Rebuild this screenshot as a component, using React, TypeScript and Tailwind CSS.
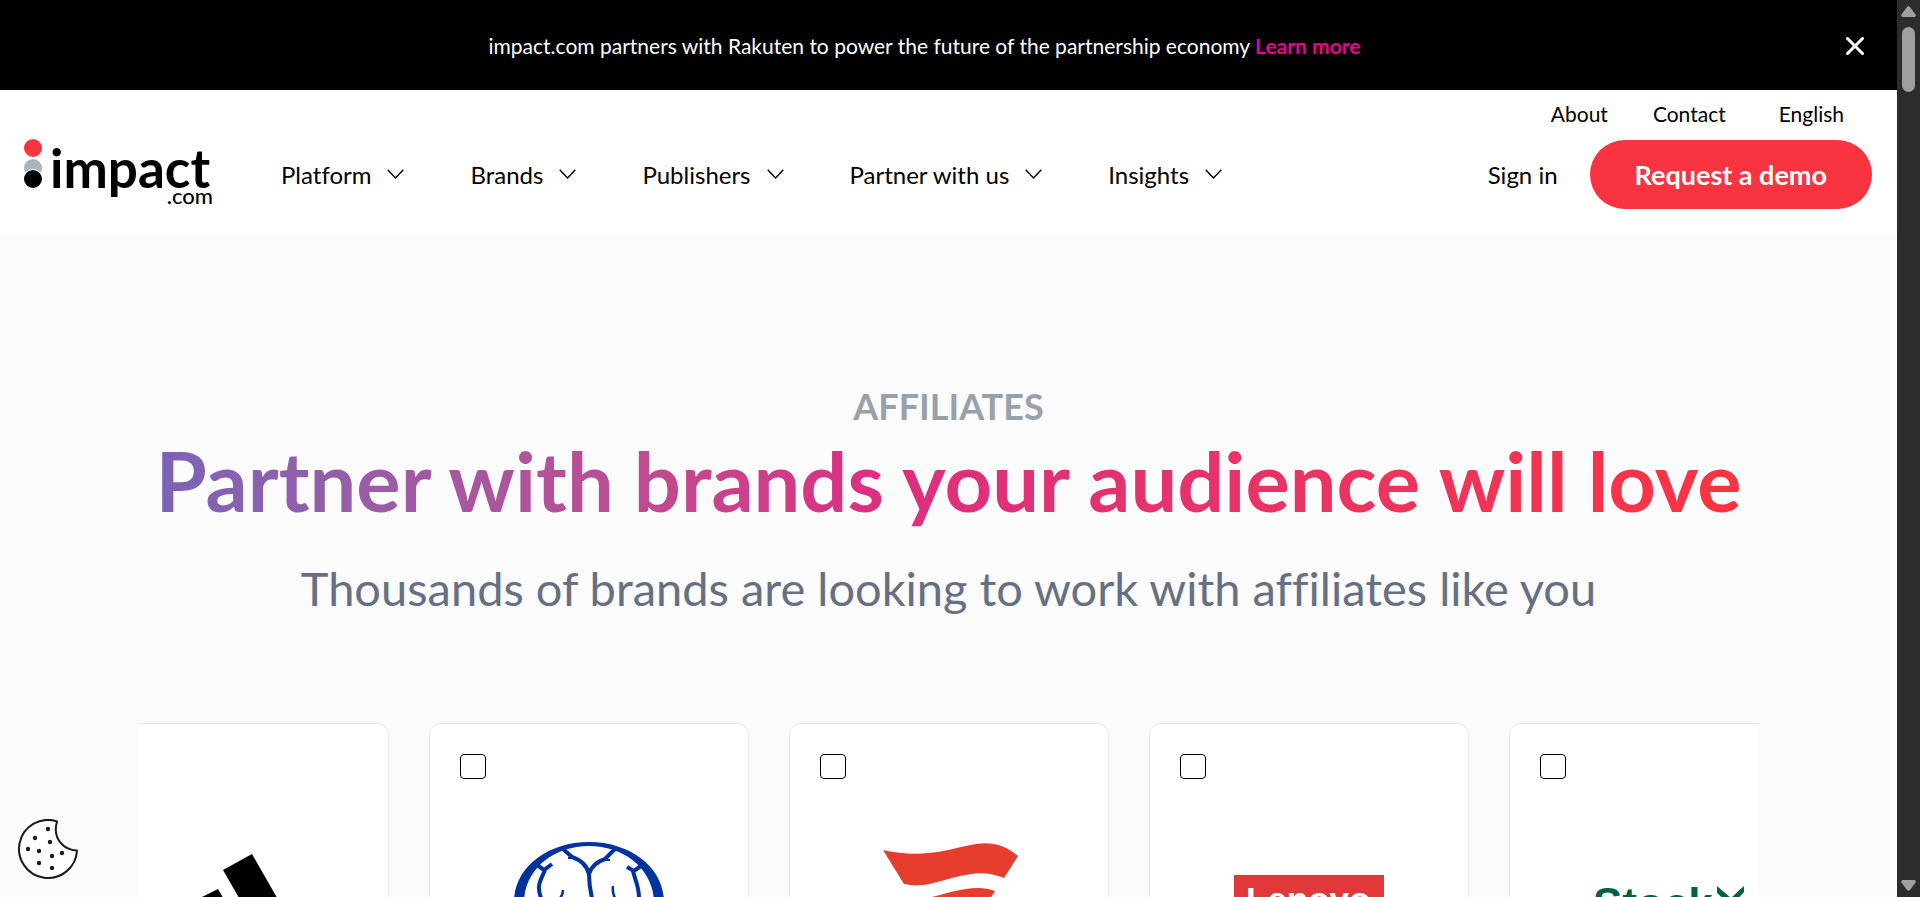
import React from "react";

const navItems = ["Platform", "Brands", "Publishers", "Partner with us", "Insights"];

const Logo = () => (
  <svg width="190" height="70" viewBox="0 0 190 70" role="img" aria-label="impact.com">
    <circle cx="9" cy="9" r="9" fill="#f7343f" />
    <circle cx="9" cy="29" r="9" fill="#a9b4be" />
    <circle cx="9" cy="40" r="10" fill="#fff" />
    <circle cx="9" cy="40" r="9" fill="#000" />
    <text x="26" y="49" fontFamily="Lato, sans-serif" fontSize="53" fontWeight="700">
      impact
    </text>
    <text x="189" y="65" textAnchor="end" fontFamily="Lato, sans-serif" fontSize="22" fontWeight="500">
      .com
    </text>
  </svg>
);

const Chevron = () => (
  <svg width="17" height="11" viewBox="0 0 17 11" fill="none" stroke="#000" strokeWidth="1.4">
    <path d="M0.7 0.7 8.5 9 16.3 0.7" />
  </svg>
);

const AdidasLogo = () => (
  <svg width="150" height="110" viewBox="0 0 150 110">
    <path d="M69 30 98 14 153 110H115z" />
    <path d="M30 66 64 49 99 110H56z" />
  </svg>
);

const BrainLogo = () => (
  <svg width="150" height="110" viewBox="0 0 150 110" fill="none" stroke="#0033a0" strokeWidth="4">
    <path
      d="M75 2C33 2 0 28 0 62s33 60 75 60 75-26 75-60S117 2 75 2zm0 4c36 0 65 24 65 57s-29 57-65 57-65-24-65-57S39 6 75 6z"
      fill="#0033a0"
      fillRule="evenodd"
      stroke="none"
    />
    <path d="M49 9 58 17C67 20 73 26 75 34 75 42 76 50 78 58V110M101 9 91 19C82 22 77 27 75 34" />
    <path d="M54 18 60 18M88 20 96 20" strokeWidth="2" />
    <path d="M23 25 30 30 38 24M31 30C27 40 22 45 27 58L34 75" />
    <path d="M127 26 120 31 113 27M119 31C121 40 125 46 125 58L118 75" />
    <path d="M49 50C49 56 46 59 42 62M99 46C98 53 100 58 104 62" strokeWidth="2.5" />
  </svg>
);

const FlagLogo = () => (
  <svg width="150" height="110" viewBox="0 0 150 110" fill="#e63d2f">
    <path d="M9 10C32 15 50 15 74 10 98 5 120-5 144 16L130 38C112 30 96 33 74 39 54 45 44 47 30 44z" />
    <path d="M50 59C68 55 100 42 121 51L108 72C90 66 78 72 58 75z" />
  </svg>
);

const LenovoLogo = () => (
  <svg width="150" height="110" viewBox="0 0 150 110">
    <path d="M0 35h150v50H0z" fill="#e1393a" />
    <text x="12" y="72" fill="#fff" fontFamily="Liberation Sans, sans-serif" fontSize="35" fontWeight="700">
      Lenovo
    </text>
  </svg>
);

const StockXLogo = () => (
  <svg width="152" height="110" viewBox="0 0 152 110" fill="#006340">
    <text x="0" y="79" fontFamily="Liberation Sans, sans-serif" fontSize="44" fontWeight="700">
      Stock
    </text>
    <path d="M124 46 138 58 151 46V52L142 62 151 72V79L138 67 124 79V72L134 62 124 53z" />
  </svg>
);

const brands = [
  { name: "adidas", Logo: AdidasLogo },
  { name: "Brain", Logo: BrainLogo },
  { name: "Flag", Logo: FlagLogo },
  { name: "Lenovo", Logo: LenovoLogo },
  { name: "StockX", Logo: StockXLogo },
];

const CookieIcon = () => (
  <svg width="60" height="60" viewBox="0 0 60 60">
    <path
      d="M39 2.4A29 29 0 1 0 59 31.5C46 31 34 20 39 2.4z"
      fill="#fff"
      stroke="#1a1a1a"
      strokeWidth="2"
      strokeLinejoin="round"
    />
    <g fill="#1a1a1a">
      <circle cx="30" cy="10" r="2.2" />
      <circle cx="17" cy="19" r="2.2" />
      <circle cx="32" cy="23" r="2.2" />
      <circle cx="10" cy="30" r="2.2" />
      <circle cx="21" cy="32" r="2.2" />
      <circle cx="34" cy="37" r="2.2" />
      <circle cx="44" cy="34" r="2.2" />
      <circle cx="21" cy="44" r="2.2" />
      <circle cx="34" cy="49" r="2.2" />
    </g>
  </svg>
);

const Banner = () => (
  <div className="flex h-[90px] items-center bg-black pt-0.5 pl-9 text-white">
    <p className="flex-1 text-center text-[21px] leading-7">
      impact.com partners with Rakuten to power the future of the partnership economy{" "}
      <a href="#" className="font-bold text-[#ec008c]">
        Learn more
      </a>
    </p>
    <button aria-label="Close" className="flex h-12 w-[84px] items-center justify-center">
      <svg width="18" height="18" viewBox="0 0 18 18" stroke="#fff" strokeWidth="3" strokeLinecap="round">
        <path d="M1.5 1.5 16.5 16.5M16.5 1.5 1.5 16.5" />
      </svg>
    </button>
  </div>
);

const Header = () => (
  <header className="flex items-end bg-white pt-2.5 pr-[25px] pb-6 pl-6">
    <a href="#">
      <Logo />
    </a>
    <nav className="ml-[67px] flex h-[69px] items-center gap-[66px]">
      {navItems.map((item) => (
        <button key={item} className="flex items-center gap-4 text-2xl leading-8 whitespace-nowrap">
          {item}
          <Chevron />
        </button>
      ))}
    </nav>
    <div className="ml-auto">
      <div className="flex justify-end pr-7 text-[21px] leading-7">
        <a href="#">About</a>
        <a href="#" className="ml-[45px]">Contact</a>
        <a href="#" className="ml-[53px]">English</a>
      </div>
      <div className="mt-3 flex items-center justify-end gap-8">
        <a href="#" className="text-2xl leading-8">Sign in</a>
        <button className="h-[69px] rounded-full bg-[#f7343f] px-[45px] text-[27px] leading-8 font-bold text-white">
          Request a demo
        </button>
      </div>
    </div>
  </header>
);

const Hero = () => (
  <section className="flex flex-col items-center pt-[151px] text-center whitespace-nowrap">
    <p className="text-4xl leading-[44px] font-bold text-[#97a1ab]">AFFILIATES</p>
    <h1 className="bg-linear-to-r from-[#7a64b6] via-[#db2f80] via-45% to-[#fa343e] bg-clip-text text-[83px] leading-[104px] font-bold text-transparent">
      Partner with brands your audience will love
    </h1>
    <p className="mt-7 text-[47px] leading-[56px] text-[#667085]">
      Thousands of brands are looking to work with affiliates like you
    </p>
  </section>
);

const BrandCarousel = () => (
  <div className="mx-auto mt-[107px] flex max-w-[1620px] justify-center gap-10 overflow-hidden">
    {brands.map(({ name, Logo: BrandLogo }) => (
      <label
        key={name}
        className="flex w-80 shrink-0 flex-col rounded-xl border border-[#e8e8e8] bg-white px-[30px] pt-[30px] pb-8"
      >
        <input
          type="checkbox"
          aria-label={name}
          className="h-[25px] w-[26px] appearance-none rounded border border-black checked:bg-black"
        />
        <span className="mt-[61px] flex justify-center">
          <BrandLogo />
        </span>
      </label>
    ))}
  </div>
);

const Scrollbar = () => (
  <div className="flex w-[23px] shrink-0 flex-col items-center bg-[#2c2c2c] py-1.5">
    <svg width="15" height="11" viewBox="0 0 15 11" fill="#9f9f9f">
      <path d="M7.5 0 9 1 15 9 14 11H1L0 9 6 1z" />
    </svg>
    <div className="mt-2.5 h-[65px] w-[13px] rounded-full bg-[#9f9f9f]" />
    <svg className="mt-auto" width="15" height="11" viewBox="0 0 15 11" fill="#9f9f9f">
      <path d="M7.5 11 6 10 0 2 1 0H14L15 2 9 10z" />
    </svg>
  </div>
);

export default function App() {
  return (
    <div className="flex h-screen overflow-hidden font-[Lato,sans-serif] text-black [font-variant-ligatures:none]">
      <div className="relative min-w-0 flex-1 overflow-hidden bg-[#fbfbfb]">
        <Banner />
        <Header />
        <main>
          <Hero />
          <BrandCarousel />
        </main>
        <button aria-label="Cookie settings" className="absolute bottom-[18px] left-[18px]">
          <CookieIcon />
        </button>
      </div>
      <Scrollbar />
    </div>
  );
}
